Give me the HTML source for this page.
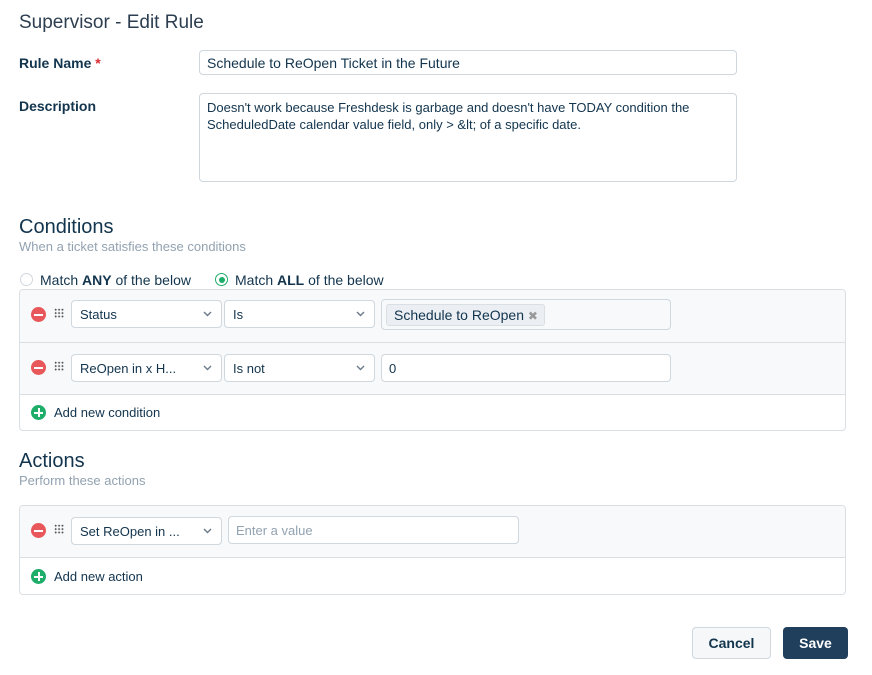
<!DOCTYPE html>
<html><head><meta charset="utf-8"><style>
*{box-sizing:border-box;margin:0;padding:0}
body{width:872px;height:675px;background:#fff;font-family:"Liberation Sans",sans-serif;color:#12344d;position:relative;overflow:hidden}
.a{position:absolute;white-space:nowrap}
.lbl{font-size:14px;font-weight:bold;color:#12344d}
.inp{position:absolute;border:1px solid #cfd7df;border-radius:4px;background:#fff;font-size:14px;color:#12344d;padding-left:7px;display:flex;align-items:center}
.sel{position:absolute;border:1px solid #cfd7df;border-radius:4px;background:#fff;font-size:13px;color:#12344d;padding-left:8px;display:flex;align-items:center}
.sel svg{position:absolute;right:9px;top:50%;margin-top:-3px}
.h2{font-size:20px;color:#12344d}
.sub{font-size:13px;color:#92a2b1}
.box{position:absolute;left:19px;width:827px;border:1px solid #dadfe3;border-radius:4px;overflow:hidden}
.row{position:absolute;left:0;right:0;background:#f7f9fa;border-bottom:1px solid #dadfe3}
.minus{position:absolute;width:15px;height:15px;border-radius:50%;background:#e8585a}
.minus:after{content:"";position:absolute;left:3px;right:3px;top:6.5px;height:2px;background:#fff}
.plus{position:absolute;width:15px;height:15px;border-radius:50%;background:#1fad6a}
.plus:before{content:"";position:absolute;left:3px;right:3px;top:6.5px;height:2px;background:#fff}
.plus:after{content:"";position:absolute;top:3px;bottom:3px;left:6.5px;width:2px;background:#fff}
.dots{position:absolute;width:10px;height:10px;background-image:radial-gradient(circle,#555 0.9px,transparent 1.1px);background-size:3.4px 3.4px}
</style></head><body>
<div class="a" style="left:19px;top:12px;font-size:19px;color:#2c3e50">Supervisor - Edit Rule</div>

<div class="a lbl" style="left:19px;top:55px">Rule Name <span style="color:#d72d30">*</span></div>
<div class="inp" style="left:199px;top:50px;width:538px;height:25px">Schedule to ReOpen Ticket in the Future</div>

<div class="a lbl" style="left:19px;top:98px">Description</div>
<div class="inp" style="left:199px;top:93px;width:538px;height:89px;align-items:flex-start;padding-top:5px;font-size:13px;line-height:17px;white-space:normal">Doesn't work because Freshdesk is garbage and doesn't have TODAY condition the ScheduledDate calendar value field, only &gt; &amp;lt; of a specific date.</div>

<div class="a h2" style="left:19px;top:216px">Conditions</div>
<div class="a sub" style="left:19px;top:239px">When a ticket satisfies these conditions</div>

<div class="a" style="left:20px;top:273px;width:13px;height:13px;border:1px solid #cfd7df;border-radius:50%"></div>
<div class="a" style="left:40px;top:272px;font-size:14px">Match <b>ANY</b> of the below</div>
<div class="a" style="left:215px;top:273px;width:13px;height:13px;border:1px solid #1fad6a;border-radius:50%"><div style="position:absolute;left:2.5px;top:2.5px;width:6px;height:6px;border-radius:50%;background:#1fad6a"></div></div>
<div class="a" style="left:235px;top:272px;font-size:14px">Match <b>ALL</b> of the below</div>

<svg width="0" height="0" style="position:absolute"><defs><path id="chev" d="M1 1 L4.5 4.5 L8 1" fill="none" stroke="#6a7a8a" stroke-width="1.4"/></defs></svg>

<div class="box" style="top:289px;height:142px">
  <div class="row" style="top:0;height:53px">
    <div class="minus" style="left:11px;top:17px"></div>
    <div class="dots" style="left:34px;top:18px"></div>
    <div class="sel" style="left:51px;top:10px;width:151px;height:28px">Status<svg width="9" height="6"><use href="#chev"/></svg></div>
    <div class="sel" style="left:204px;top:10px;width:151px;height:28px">Is<svg width="9" height="6"><use href="#chev"/></svg></div>
    <div class="inp" style="left:361px;top:9px;width:290px;height:31px;background:#f7f9fa;padding-left:4px">
      <span style="background:#ebeff3;border:1px solid #dadfe3;border-radius:3px;padding:2px 6px 2px 7px;font-size:14px">Schedule to ReOpen <span style="color:#999;font-size:12px">✖</span></span>
    </div>
  </div>
  <div class="row" style="top:53px;height:52px">
    <div class="minus" style="left:11px;top:17px"></div>
    <div class="dots" style="left:34px;top:18px"></div>
    <div class="sel" style="left:51px;top:11px;width:151px;height:28px">ReOpen in x H...<svg width="9" height="6"><use href="#chev"/></svg></div>
    <div class="sel" style="left:204px;top:11px;width:151px;height:28px">Is not<svg width="9" height="6"><use href="#chev"/></svg></div>
    <div class="inp" style="left:361px;top:11px;width:290px;height:28px;font-size:13px">0</div>
  </div>
  <div class="plus" style="left:11px;top:115px"></div>
  <div class="a" style="left:34px;top:115px;font-size:13px">Add new condition</div>
</div>

<div class="a h2" style="left:19px;top:450px">Actions</div>
<div class="a sub" style="left:19px;top:473px">Perform these actions</div>

<div class="box" style="top:505px;height:90px">
  <div class="row" style="top:0;height:52px">
    <div class="minus" style="left:11px;top:17px"></div>
    <div class="dots" style="left:34px;top:18px"></div>
    <div class="sel" style="left:51px;top:11px;width:151px;height:28px">Set ReOpen in ...<svg width="9" height="6"><use href="#chev"/></svg></div>
    <div class="inp" style="left:208px;top:10px;width:291px;height:28px;font-size:13px;color:#92a2b1">Enter a value</div>
  </div>
  <div class="plus" style="left:11px;top:63px"></div>
  <div class="a" style="left:34px;top:63px;font-size:13px">Add new action</div>
</div>

<div class="a" style="left:692px;top:627px;width:79px;height:32px;border:1px solid #cfd7df;border-radius:4px;background:#f5f7f9;font-size:14px;font-weight:bold;text-align:center;line-height:30px">Cancel</div>
<div class="a" style="left:783px;top:627px;width:65px;height:32px;border-radius:4px;background:#1f3f5c;color:#fff;font-size:14px;font-weight:bold;text-align:center;line-height:32px">Save</div>
</body></html>
